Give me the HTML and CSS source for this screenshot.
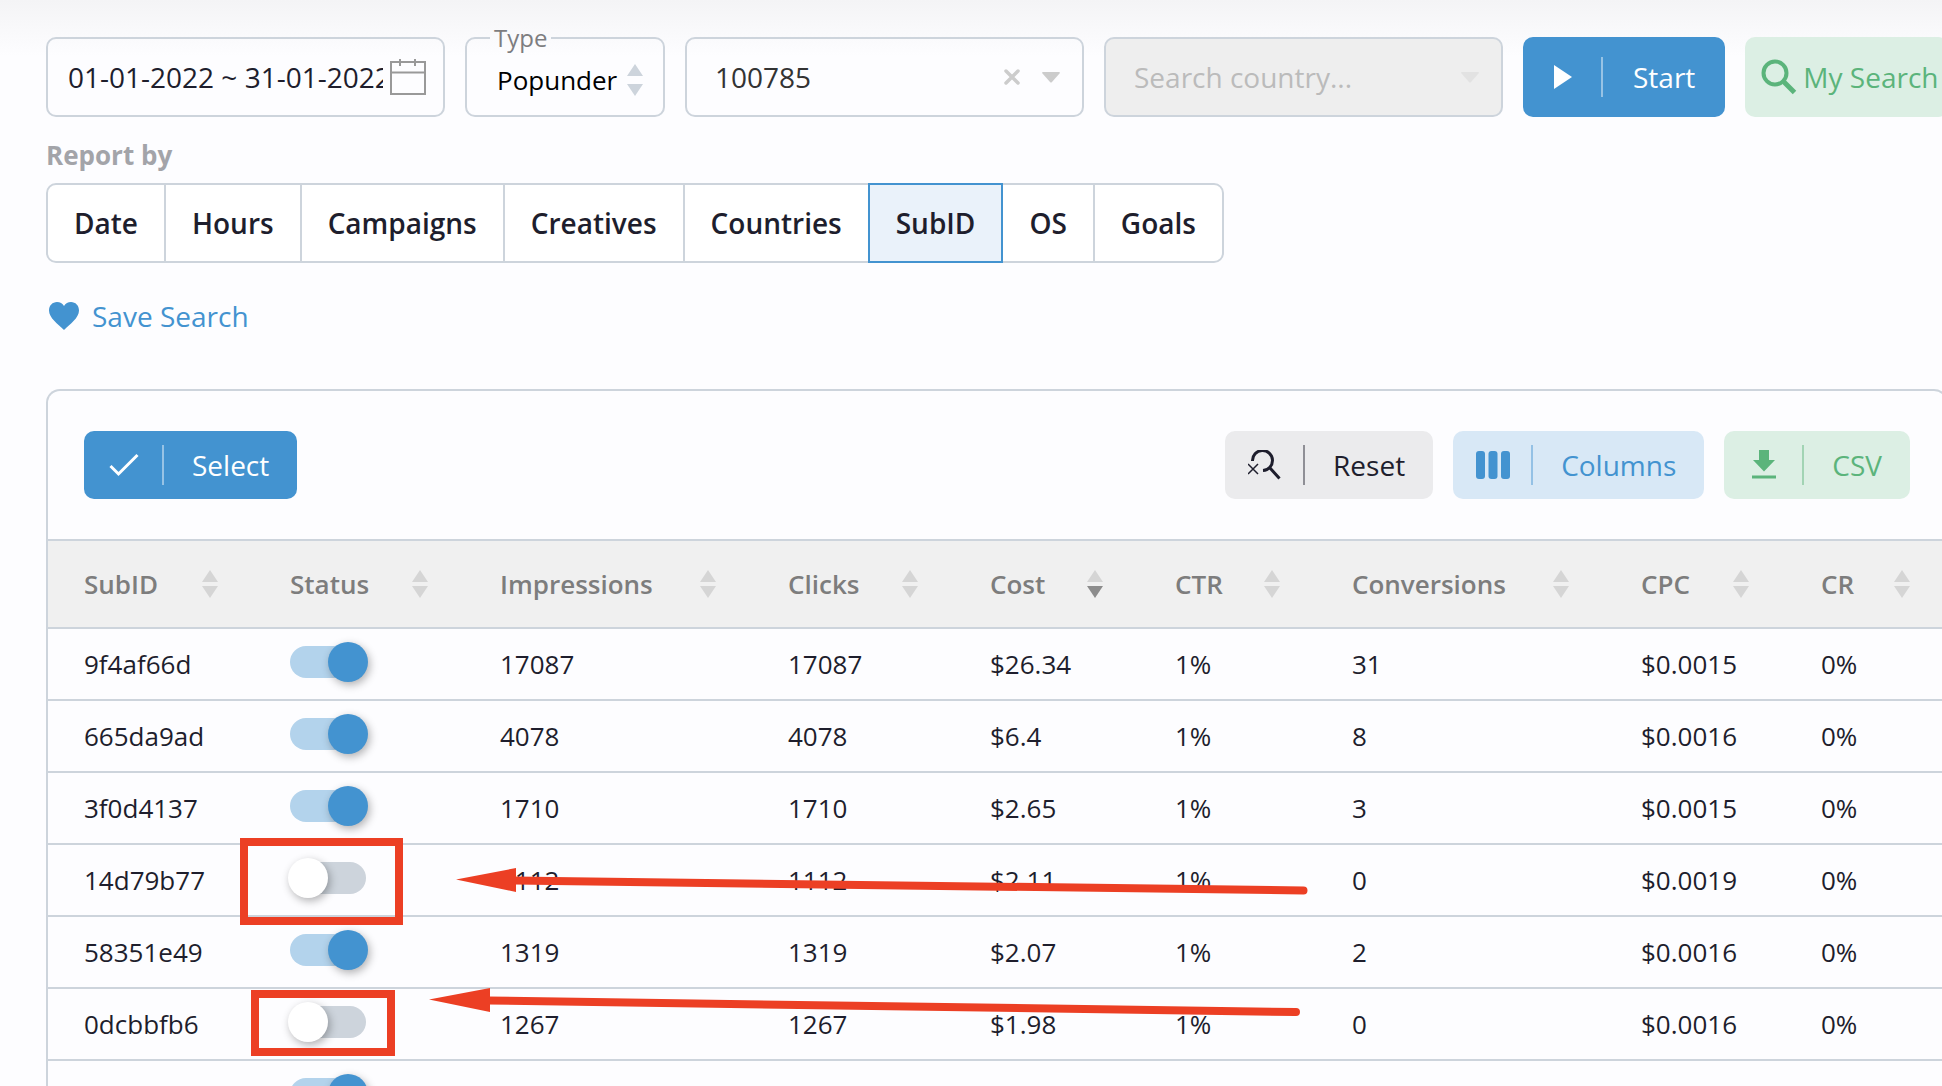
FILE: index.html
```html
<!DOCTYPE html>
<html lang="en">
<head>
<meta charset="utf-8">
<title>Statistics</title>
<link rel="stylesheet" href="styles.css">
</head>
<body>
<svg class="sprite" aria-hidden="true">
  <symbol id="sorter" viewBox="0 0 16 28"><path class="sort-up" d="M8 0L16 12H0z"/><path class="sort-down" d="M0 16h16L8 28z"/></symbol>
</svg>
<main class="page">
  <form class="filters">
    <div class="field field-date">
      <input class="control" type="text" aria-label="Period" value="01-01-2022 ~ 31-01-2022">
      <svg class="calendar" width="38" height="38" viewBox="0 0 38 38" fill="none" stroke="#999" stroke-width="2"><path d="M2 4h34v32H2zM2 14.500h34M11 1v7M26 1v7"/></svg>
    </div>
    <fieldset class="type">
      <legend><label for="type">Type</label></legend>
      <select id="type"><option>Popunder</option></select>
      <svg class="sorter type-sorter" width="16" height="32" viewBox="0 0 16 32"><path d="M8 0l8 12H0zM0 20h16L8 32z"/></svg>
    </fieldset>
    <div class="field field-wide">
      <input class="control" type="text" aria-label="Campaign" value="100785">
      <button class="clear" type="button" aria-label="Clear"><svg width="16" height="16" viewBox="0 0 16 16" stroke="#ccc" stroke-width="3.500" stroke-linecap="round"><path d="M2 2l12 12M14 2L2 14"/></svg></button>
      <svg class="caret" width="18" height="11" viewBox="0 0 18 11"><path d="M1 0h16q1.500 0 .5 1.500L10 10q-1 1-2 0L.5 1.500Q-.5 0 1 0z" fill="#ccc"/></svg>
    </div>
    <div class="field field-wide is-disabled">
      <input class="control" type="text" aria-label="Country" placeholder="Search country..." disabled>
      <svg class="caret" width="18" height="11" viewBox="0 0 18 11"><path d="M1 0h16q1.500 0 .5 1.500L10 10q-1 1-2 0L.5 1.500Q-.5 0 1 0z" fill="#e2e2e2"/></svg>
    </div>
    <button class="btn btn-primary btn-start" type="button">
      <span class="btn-icon"><svg width="18" height="24" viewBox="0 0 18 24"><path d="M0 0l18 12L0 24z" fill="currentColor"/></svg></span>
      <span class="btn-text">Start</span>
    </button>
    <button class="my-search" type="button">
      <svg width="36" height="36" viewBox="0 0 36 36" fill="none" stroke="currentColor"><circle cx="14" cy="14" r="11.500" stroke-width="4"/><path d="M23 23l10.500 10.500" stroke-width="5"/></svg>
      <span>My Search</span>
    </button>
  </form>

  <h2 class="caption">Report by</h2>
  <div class="tabs">
    <button type="button">Date</button>
    <button type="button">Hours</button>
    <button type="button">Campaigns</button>
    <button type="button">Creatives</button>
    <button type="button">Countries</button>
    <button type="button" class="active">SubID</button>
    <button type="button">OS</button>
    <button type="button">Goals</button>
  </div>

  <a class="save" href="#save">
    <svg width="32" height="28" viewBox="0 0 32 28"><path d="M16 28C10 22 1 16 1 8.500C1 3.500 4.500 0 9 0c3 0 5.500 1.500 7 4c1.500-2.500 4-4 7-4c4.500 0 8 3.500 8 8.500C31 16 22 22 16 28z" fill="currentColor"/></svg>
    <span>Save Search</span>
  </a>

  <section class="panel">
    <div class="toolbar">
      <button class="btn btn-primary" type="button">
        <span class="btn-icon"><svg width="30" height="24" viewBox="0 0 30 24" fill="none" stroke="currentColor" stroke-width="3"><path d="M1.500 13l8 8L28.500 2"/></svg></span>
        <span class="btn-text">Select</span>
      </button>
      <div class="actions">
        <button class="btn btn-grey" type="button">
          <span class="btn-icon"><svg width="34" height="30" viewBox="0 0 34 30" fill="none" stroke="currentColor"><path d="M4.500 11A10 10 0 1 1 15 20.500M22 18l9.500 10.500" stroke-width="3"/><path d="M0 14l10 10M10 14L0 24" stroke-width="1.500"/></svg></span>
          <span class="btn-text">Reset</span>
        </button>
        <button class="btn btn-blue" type="button">
          <span class="btn-icon"><svg width="34" height="28" viewBox="0 0 34 28" fill="currentColor"><rect width="9" height="28" rx="3"/><rect x="12.500" width="9" height="28" rx="3"/><rect x="25" width="9" height="28" rx="3"/></svg></span>
          <span class="btn-text">Columns</span>
        </button>
        <button class="btn btn-green" type="button">
          <span class="btn-icon"><svg width="24" height="30" viewBox="0 0 24 30" fill="currentColor"><path d="M7 0h10v10h6L12 21.500L1 10h6zM0 25.500h24v3H0z"/></svg></span>
          <span class="btn-text">CSV</span>
        </button>
      </div>
    </div>
    <table class="grid">
      <colgroup><col class="c-id"><col class="c-status"><col class="c-impr"><col class="c-clicks"><col class="c-cost"><col class="c-ctr"><col class="c-conv"><col class="c-cpc"><col class="c-cr"></colgroup>
      <thead>
        <tr>
          <th><div class="head">SubID<svg class="sorter"><use href="#sorter"/></svg></div></th>
          <th><div class="head">Status<svg class="sorter"><use href="#sorter"/></svg></div></th>
          <th><div class="head">Impressions<svg class="sorter"><use href="#sorter"/></svg></div></th>
          <th><div class="head">Clicks<svg class="sorter"><use href="#sorter"/></svg></div></th>
          <th><div class="head">Cost<svg class="sorter sorted-desc"><use href="#sorter"/></svg></div></th>
          <th><div class="head">CTR<svg class="sorter"><use href="#sorter"/></svg></div></th>
          <th><div class="head">Conversions<svg class="sorter"><use href="#sorter"/></svg></div></th>
          <th><div class="head">CPC<svg class="sorter"><use href="#sorter"/></svg></div></th>
          <th><div class="head">CR<svg class="sorter"><use href="#sorter"/></svg></div></th>
        </tr>
      </thead>
      <tbody>
        <tr><td>9f4af66d</td><td><input class="switch" type="checkbox" aria-label="9f4af66d" checked></td><td>17087</td><td>17087</td><td>$26.34</td><td>1%</td><td>31</td><td>$0.0015</td><td>0%</td></tr>
        <tr><td>665da9ad</td><td><input class="switch" type="checkbox" aria-label="665da9ad" checked></td><td>4078</td><td>4078</td><td>$6.4</td><td>1%</td><td>8</td><td>$0.0016</td><td>0%</td></tr>
        <tr><td>3f0d4137</td><td><input class="switch" type="checkbox" aria-label="3f0d4137" checked></td><td>1710</td><td>1710</td><td>$2.65</td><td>1%</td><td>3</td><td>$0.0015</td><td>0%</td></tr>
        <tr><td>14d79b77</td><td><input class="switch" type="checkbox" aria-label="14d79b77"></td><td>1112</td><td>1112</td><td>$2.11</td><td>1%</td><td>0</td><td>$0.0019</td><td>0%</td></tr>
        <tr><td>58351e49</td><td><input class="switch" type="checkbox" aria-label="58351e49" checked></td><td>1319</td><td>1319</td><td>$2.07</td><td>1%</td><td>2</td><td>$0.0016</td><td>0%</td></tr>
        <tr><td>0dcbbfb6</td><td><input class="switch" type="checkbox" aria-label="0dcbbfb6"></td><td>1267</td><td>1267</td><td>$1.98</td><td>1%</td><td>0</td><td>$0.0016</td><td>0%</td></tr>
        <tr><td></td><td><input class="switch" type="checkbox" aria-label="Status" checked></td><td></td><td></td><td></td><td></td><td></td><td></td><td></td></tr>
      </tbody>
    </table>
    <!-- Hand-drawn marks over the disabled rows -->
    <svg class="marks" width="1100" height="230" viewBox="230 830 1100 230" aria-hidden="true">
      <g fill="none" stroke="#ec3f24" stroke-width="8">
        <rect x="244" y="842" width="155" height="79"/>
        <rect x="255" y="994" width="136" height="58"/>
        <path d="M514 880.500L1303.500 890.500M488 1000.500L1296 1012" stroke-linecap="round"/>
      </g>
      <path fill="#ec3f24" d="M456 879.500L516 868v24zM429 999.500L490 988v24z"/>
    </svg>
  </section>
</main>
</body>
</html>
```
FILE: styles.css
```css
* {
  box-sizing: border-box;
}

body {
  margin: 0;
  font-family: "Open Sans", "Noto Sans", sans-serif;
  font-size: 26px;
  color: #1e1e2d;
  background: #fdfdff linear-gradient(#f4f4f6, #fdfdff) no-repeat;
  background-size: 100% 56px;
}

button,
input,
select {
  font: inherit;
  color: inherit;
}

button {
  border: 0;
  padding: 0;
  background: none;
  cursor: pointer;
}

.sprite {
  display: none;
}

/* The content is slightly wider than the viewport and is clipped by it */
.page {
  height: 100vh;
  overflow: hidden;
  padding-left: 46px;
}

.filters {
  display: flex;
  gap: 20px;
  height: 117px;
  padding-top: 37px;
  margin-right: -6px;
  font-size: 28px;
}

.field {
  display: flex;
  align-items: center;
  flex: 0 0 399px;
  min-width: 0;
  height: 80px;
  border: 2px solid #cdd4dc;
  border-radius: 10px;
}

.field-date {
  padding: 0 16px 0 20px;
  gap: 6px;
}

.field-wide {
  padding: 0 22px 0 28px;
  gap: 22px;
  color: #333;
}

.control {
  flex: 1;
  width: 0;
  min-width: 0;
  height: 76px;
  padding: 0;
  border: 0;
  outline: 0;
  background: none;
}

.control::placeholder {
  color: #bbb;
  opacity: 1;
}

.is-disabled {
  background: #eee;
}

.clear {
  display: flex;
}

.type {
  display: flex;
  align-items: center;
  flex: 0 0 200px;
  height: 96px;
  margin: -16px 0 0;
  padding: 0 20px 10px 30px;
  min-width: 0;
  border: 2px solid #cdd4dc;
  border-radius: 10px;
  color: #000;
  font-size: 26px;
}

.type legend {
  height: 34px;
  margin-left: -7px;
  padding: 0 4px;
  font-size: 24px;
  line-height: 34px;
  color: #7d7d80;
}

.type select {
  flex: 1;
  min-width: 0;
  height: 40px;
  padding: 0;
  border: 0;
  background: none;
  appearance: none;
}

.type-sorter {
  fill: #cdd4dc;
}

.btn {
  display: flex;
  align-items: center;
  flex: none;
  height: 68px;
  border-radius: 10px;
  font-size: 28px;
}

.btn-icon {
  display: flex;
  align-items: center;
  justify-content: center;
  width: 80px;
  height: 40px;
  padding-left: 2px;
  border-right: 2px solid;
  border-color: color-mix(in srgb, currentColor 45%, transparent);
}

.btn-text {
  padding: 0 28px;
}

.btn-start {
  height: 80px;
}

.btn-start .btn-text {
  padding: 0 30px;
}

.btn-primary {
  background: #4393d0;
  color: #fff;
}

.btn-grey {
  background: #ebebed;
  color: #1e1e2d;
}

.btn-blue {
  background: #d8e8f6;
  color: #4393d0;
}

.btn-green,
.my-search {
  background: #dcefe4;
  color: #5bb47b;
}

.my-search {
  display: flex;
  align-items: center;
  gap: 6px;
  flex: 1;
  height: 80px;
  padding-left: 16px;
  border-radius: 10px;
  white-space: nowrap;
}

.caption {
  margin: 20px 0 10px;
  font-size: 26px;
  line-height: 36px;
  font-weight: 700;
  color: #a3a4a9;
}

.tabs {
  display: flex;
  width: max-content;
  font-size: 28px;
  font-weight: 600;
}

.tabs button {
  height: 80px;
  padding: 0 26px;
  margin-right: -2px;
  border: 2px solid #cdd4dc;
  background: #fff;
}

.tabs button:first-child {
  border-radius: 10px 0 0 10px;
}

.tabs button:last-child {
  margin-right: 0;
  border-radius: 0 10px 10px 0;
}

.tabs .active {
  position: relative;
  border-color: #4393d0;
  background: #eaf2fa;
}

.save {
  display: flex;
  align-items: center;
  gap: 12px;
  width: max-content;
  margin: 33px 0 53px 2px;
  font-size: 28px;
  line-height: 40px;
  color: #4393d0;
  text-decoration: none;
}

.panel {
  position: relative;
  margin-right: -6px;
  border: 2px solid #cdd4dc;
  border-bottom: 0;
  border-radius: 14px 14px 0 0;
}

.toolbar {
  display: flex;
  justify-content: space-between;
  padding: 40px 36px;
}

.actions {
  display: flex;
  gap: 20px;
}

.grid {
  width: 100%;
  table-layout: fixed;
  border-collapse: separate;
  border-spacing: 0;
}

.c-id { width: 206px; }
.c-status { width: 210px; }
.c-impr { width: 288px; }
.c-clicks { width: 202px; }
.c-cost { width: 185px; }
.c-ctr { width: 177px; }
.c-conv { width: 289px; }
.c-cpc { width: 180px; }
.c-cr { width: 161px; }

.grid th {
  height: 90px;
  padding: 0 36px;
  border: solid #cdd4dc;
  border-width: 2px 0;
  background: #f0f0f0;
  font-weight: 600;
  text-align: left;
  color: #7d7d7d;
}

.head {
  display: flex;
  align-items: center;
  justify-content: space-between;
}

.head .sorter {
  width: 16px;
  height: 28px;
  fill: #d5d5d5;
}

.head .sorted-desc {
  --down: #8c8c8c;
}

.sort-down {
  fill: var(--down, #d5d5d5);
}

.grid td {
  height: 72px;
  padding: 0 0 0 36px;
  border-bottom: 2px solid #cdd4dc;
  white-space: nowrap;
}

.switch {
  appearance: none;
  display: flex;
  align-items: center;
  width: 76px;
  height: 32px;
  margin: 0 0 4px;
  border-radius: 16px;
  background: #cdd4dc;
  cursor: pointer;
}

.switch::before {
  content: "";
  flex: none;
  width: 40px;
  height: 40px;
  margin-left: -2px;
  border-radius: 50%;
  background: #fff;
  box-shadow: 2px 3px 8px rgba(0, 0, 0, 0.3);
}

.switch:checked {
  background: #b3d3ec;
}

.switch:checked::before {
  margin-left: 38px;
  background: #4393d0;
}

.marks {
  position: absolute;
  left: 182px;
  top: 439px;
  pointer-events: none;
}
```
